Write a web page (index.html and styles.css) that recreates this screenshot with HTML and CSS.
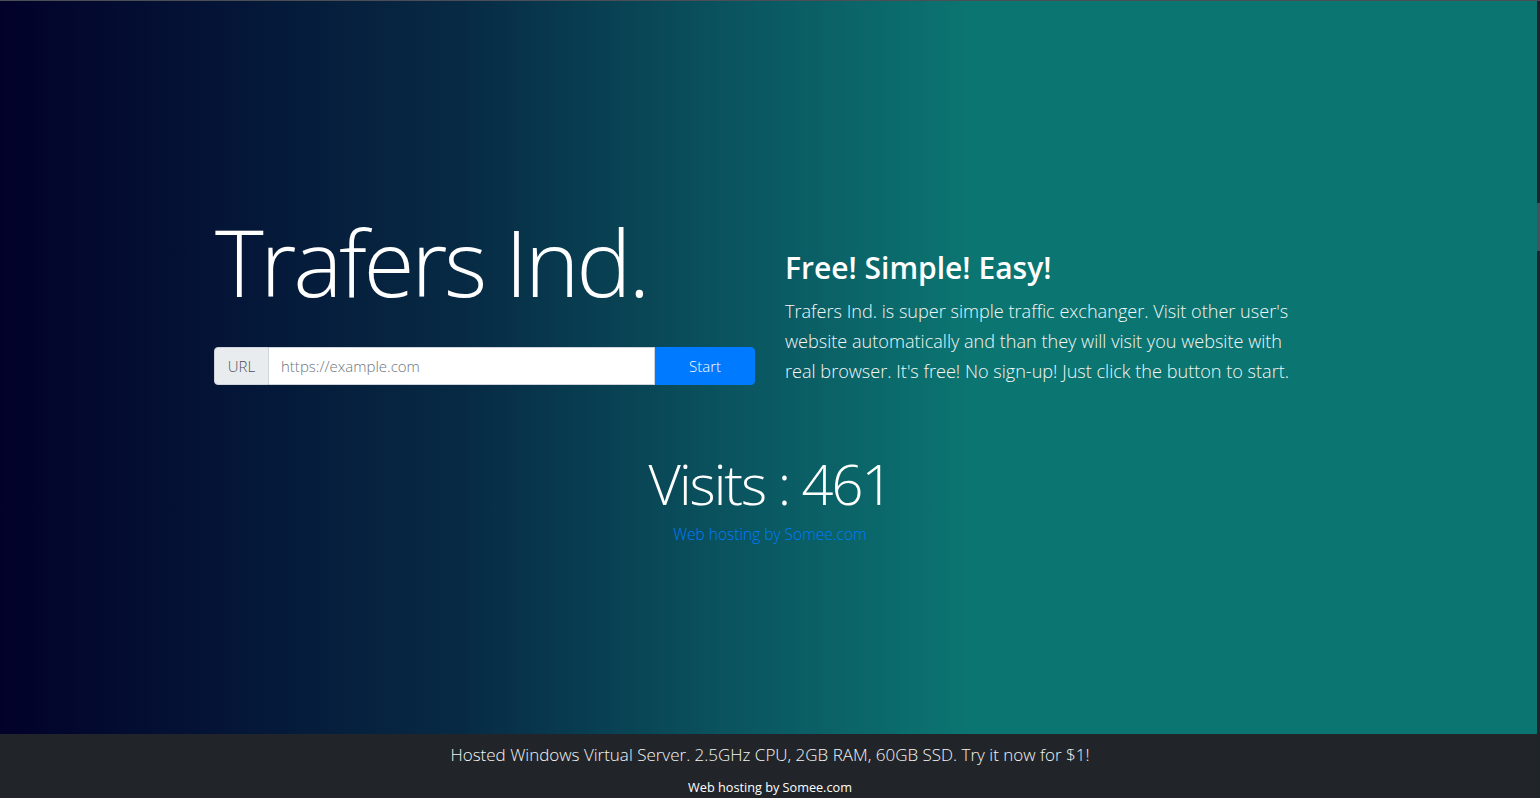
FILE: index.html
```html
<!DOCTYPE html>
<html lang="en">
<head>
<meta charset="utf-8">
<title>Trafers Ind.</title>
<link rel="stylesheet" href="styles.css">
</head>
<body>
<div class="page">
  <main class="hero">
    <div class="container">
      <div class="row">
        <div class="col">
          <h1 class="title">Trafers Ind.</h1>
          <form class="input-group">
            <span class="addon">URL</span>
            <input class="url" type="text" placeholder="https://example.com">
            <button class="btn" type="button">Start</button>
          </form>
        </div>
        <div class="col col-text">
          <h3 class="subtitle">Free! Simple! Easy!</h3>
          <p class="lead">Trafers Ind. is super simple traffic exchanger. Visit other user's website automatically and than they will visit you website with real browser. It's free! No sign-up! Just click the button to start.</p>
        </div>
      </div>
      <div class="visits">
        <div class="count">Visits : 461</div>
        <a class="host-link" href="#">Web hosting by Somee.com</a>
      </div>
    </div>
  </main>
  <footer class="footer">
    <div class="promo">Hosted Windows Virtual Server. 2.5GHz CPU, 2GB RAM, 60GB SSD. Try it now for $1!</div>
    <div class="credit">Web hosting by Somee.com</div>
  </footer>
</div>
<div class="scrollbar"><div class="thumb"></div></div>
</body>
</html>
```

FILE: styles.css
```css
* { box-sizing: border-box; }
html, body { margin: 0; padding: 0; height: 100%; }
body {
  font-family: "Open Sans", "Segoe UI", sans-serif;
  font-weight: 300;
  color: #fff;
  background: #212529;
  overflow: hidden;
}
.page {
  height: 798px;
  display: flex;
  flex-direction: column;
  border-top: 1px solid #4b4f55;
}
.hero {
  flex: 1;
  background: linear-gradient(to right, #02012a 0%, #072a44 30%, #0a5560 48%, #0b7571 63%, #0b7571 100%);
  display: flex;
  justify-content: center;
  padding-top: 205px;
}
.container {
  width: 1140px;
  padding: 0 15px;
}
.row {
  display: flex;
  margin: 0 -15px;
}
.col {
  flex: 0 0 50%;
  padding: 0 15px;
}
.title {
  font-size: 93px;
  font-weight: 300;
  line-height: 1.2;
  margin: 0 0 29px;
  letter-spacing: -3.4px;
}
.input-group {
  display: flex;
  height: 38px;
  margin-left: -1px;
}
.addon {
  width: 55px;
  display: flex;
  align-items: center;
  justify-content: center;
  background: #e9ecef;
  color: #495057;
  border: 1px solid #ced4da;
  border-radius: 4px 0 0 4px;
  font-size: 15px;
}
.url {
  flex: 1;
  border: 1px solid #ced4da;
  border-left: 0;
  background: #fff;
  padding: 0 12px;
  font-family: inherit;
  font-weight: 300;
  font-size: 15px;
  color: #495057;
  outline: none;
}
.url::placeholder { color: #6c757d; }
.btn {
  width: 100px;
  border: 1px solid #007bff;
  background: #007bff;
  color: #fff;
  font-family: inherit;
  font-weight: 300;
  font-size: 15px;
  border-radius: 0 4px 4px 0;
}
.col-text {
  padding-top: 44px;
}
.subtitle {
  font-size: 30px;
  font-weight: 600;
  margin: 0 0 10px;
  line-height: 36px;
}
.lead {
  font-size: 18.1px;
  line-height: 30px;
  margin: 0;
  max-width: 520px;
  font-weight: 300;
  color: #f4f7f7;
}
.visits {
  text-align: center;
  margin-top: 64px;
}
.count {
  font-size: 56px;
  font-weight: 300;
  line-height: 1.2;
  letter-spacing: -2px;
}
.host-link {
  display: block;
  width: fit-content;
  margin: 6px auto 0;
  color: #007bff;
  font-size: 15.5px;
  text-decoration: none;
}
.footer {
  height: 64px;
  flex: 0 0 64px;
  background: #212529;
  text-align: center;
  display: flex;
  flex-direction: column;
  align-items: center;
}
.promo {
  font-size: 17px;
  margin-top: 9px;
  color: #f4f4f4;
}
.credit {
  font-size: 12.7px;
  font-weight: 400;
  margin-top: 12px;
}
.scrollbar {
  position: fixed;
  top: 1px;
  right: 0;
  width: 3px;
  height: 797px;
  background: #1e2428;
}
.thumb {
  margin-top: 202px;
  height: 48px;
  background: #4a5056;
}
```
